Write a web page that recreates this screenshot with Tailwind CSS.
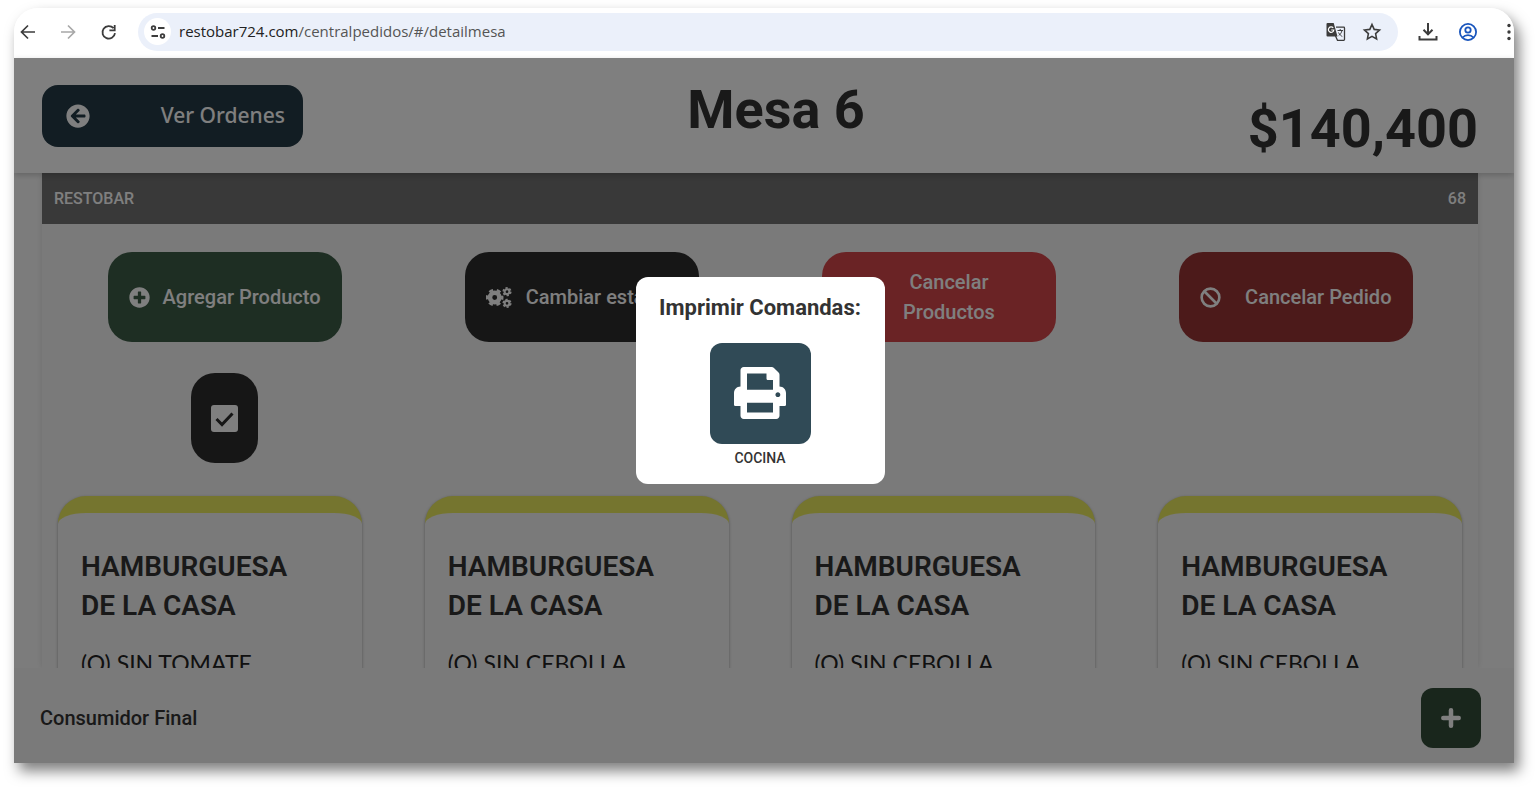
<!DOCTYPE html>
<html lang="es">
<head>
<meta charset="utf-8">
<meta name="viewport" content="width=device-width, initial-scale=1">
<title>Mesa 6 - Restobar</title>
<script src="https://cdn.jsdelivr.net/npm/@tailwindcss/browser@4"></script>
</head>
<body class="bg-white font-['Roboto',sans-serif] text-[#333]">
<div class="flex h-screen flex-col pt-2 pr-[22px] pb-[29px] pl-3.5">
<div class="flex min-h-0 flex-1 flex-col overflow-hidden rounded-t-3xl shadow-[5px_8px_14px_rgba(0,0,0,0.5)]">

  <!-- Browser toolbar -->
  <nav aria-label="Navegador" class="flex h-[50px] shrink-0 items-center overflow-hidden bg-white pb-[3px] pl-1 text-[#3c3c3c]">
    <button type="button" aria-label="Atrás" class="flex w-5 shrink-0 justify-center"><svg class="size-5" viewBox="0 0 20 20" fill="none" stroke="currentColor" stroke-width="1.7"><path d="M17 10H4M10 3.500 3.500 10l6.500 6.500"/></svg></button>
    <button type="button" aria-label="Adelante" class="ml-5 flex w-5 shrink-0 justify-center text-[#a8a8a8]"><svg class="size-5" viewBox="0 0 20 20" fill="none" stroke="currentColor" stroke-width="1.7"><path d="M3 10h13M10 3.500 16.500 10 10 16.500"/></svg></button>
    <button type="button" aria-label="Recargar" class="ml-5 flex w-5 shrink-0 justify-center"><svg class="size-5" viewBox="0 0 20 20" fill="none" stroke="currentColor" stroke-width="1.8"><path d="M15.500 6.200A6.300 6.300 0 1 0 17 11.200M16.700 3v5.300h-5.300"/></svg></button>
    <div class="ml-5 flex h-[38px] flex-1 items-center rounded-full bg-[#ebf0fa] px-1.5">
      <button type="button" aria-label="Información del sitio" class="flex size-[27px] shrink-0 items-center justify-center rounded-full bg-white"><svg class="size-4" viewBox="0 0 16 16" fill="none" stroke="currentColor" stroke-width="1.8"><circle cx="3.500" cy="4" r="1.800"/><path d="M8 4h6.500M1.500 12h6.500"/><circle cx="12.500" cy="12" r="1.800"/></svg></button>
      <span class="ml-2 font-['Open_Sans','Noto_Sans',sans-serif] text-[15px] whitespace-nowrap text-[#555]"><span class="text-[#222]">restobar724.com</span>/centralpedidos/#/detailmesa</span>
      <button type="button" aria-label="Traducir" class="ml-auto"><svg class="size-5" viewBox="0 0 20 20"><path d="M10 5.200h7.700c.5 0 .8.300.8.800v11.500c0 .5-.3.800-.8.800h-6.200L9.500 14" fill="none" stroke="#3c3c3c" stroke-width="1.300"/><path d="M1.500 1h6.200l3.800 13.500h-10Q.5 14.500.5 13.500V2q0-1 1-1z" fill="#3c3c3c"/><path d="M7.200 5.900A2.700 2.700 0 1 0 7.800 8H5.200" fill="none" stroke="#fff" stroke-width="1.200"/><path d="M11.500 8.500h5.500M14.200 7v1.500M16 8.500c-.5 2.500-2 4-3.300 5M12.500 10.500c1 2 2.500 3.300 3.800 4" fill="none" stroke="#3c3c3c" stroke-width="1"/></svg></button>
      <button type="button" aria-label="Favorito" class="mr-2.5 ml-4"><svg class="size-5" viewBox="0 0 20 20" fill="none" stroke="currentColor" stroke-width="1.600"><path d="m10 2.500 2.200 4.900 5.300.6-3.900 3.600 1 5.300L10 14.300l-4.600 2.600 1-5.300L2.500 8l5.300-.6z"/></svg></button>
    </div>
    <button type="button" aria-label="Descargas" class="ml-5"><svg class="size-5" viewBox="0 0 20 20" fill="none" stroke="currentColor" stroke-width="2"><path d="M10 1v11M5.500 7.800 10 12.300l4.500-4.500M1.500 14v3.500h17V14"/></svg></button>
    <button type="button" aria-label="Perfil" class="ml-5 text-[#1a56bd]"><svg class="size-5" viewBox="0 0 20 20" fill="none" stroke="currentColor" stroke-width="1.800"><circle cx="10" cy="10" r="8.100"/><circle cx="10" cy="8" r="2.700"/><path d="M4.500 15.500c3-3.300 8-3.300 11 0"/></svg></button>
    <button type="button" aria-label="Menú" class="-mr-1 ml-5"><svg class="size-5" viewBox="0 0 20 20" fill="currentColor"><circle cx="11" cy="3.500" r="1.700"/><circle cx="11" cy="10" r="1.700"/><circle cx="11" cy="16.500" r="1.700"/></svg></button>
  </nav>

  <div class="relative flex min-h-0 flex-1 flex-col bg-[#f9f9f9]">
    <header class="relative z-10 grid h-[115px] shrink-0 grid-cols-3 items-start bg-white pr-9 pl-7 shadow-[0_2px_6px_rgba(0,0,0,0.2)]">
      <button type="button" class="mt-[27px] flex h-[62px] w-[261px] items-center justify-between rounded-2xl bg-[#243a46] pr-[18px] pl-6 font-['Noto_Sans','Open_Sans',sans-serif] text-[21px] font-medium text-white">
        <svg class="size-6" viewBox="0 0 512 512" fill="currentColor"><path d="M256 504C119 504 8 393 8 256S119 8 256 8s248 111 248 248-111 248-248 248zm28.900-143.600L209.400 288H392c13.300 0 24-10.700 24-24v-16c0-13.300-10.700-24-24-24H209.400l75.500-72.400c9.700-9.300 9.900-24.800.4-34.300l-11-10.900c-9.400-9.400-24.600-9.400-33.900 0L107.700 239c-9.400 9.400-9.400 24.600 0 33.900l132.700 132.700c9.400 9.400 24.600 9.400 33.900 0l11-10.900c9.500-9.500 9.300-25-.4-34.300z"/></svg>
        Ver Ordenes
      </button>
      <h1 class="mt-4 pl-8 text-center text-[54px] leading-[72px] font-bold">Mesa 6</h1>
      <p class="mt-[35px] text-right text-[54px] leading-[72px] font-bold">$140,400</p>
    </header>

    <main class="mr-9 ml-7 flex min-h-0 flex-1 flex-col overflow-hidden bg-[#f4f4f4] shadow-[0_0_6px_rgba(0,0,0,0.12)]">
      <div class="flex h-[51px] shrink-0 items-center justify-between bg-[#727272] px-3 text-base font-medium text-white"><span>RESTOBAR</span><span>68</span></div>
      <div class="grid shrink-0 grid-cols-4 justify-items-center gap-y-[31px] px-1 pt-7 text-xl leading-[30px] font-medium text-white">
        <button type="button" class="flex h-[90px] w-[234px] items-center justify-between rounded-3xl bg-[#3c5c46] px-[21px]">
          <svg class="size-[21px]" viewBox="0 0 512 512" fill="currentColor"><path d="M256 8C119 8 8 119 8 256s111 248 248 248 248-111 248-248S393 8 256 8zm144 276c0 6.600-5.400 12-12 12h-92v92c0 6.600-5.400 12-12 12h-56c-6.600 0-12-5.400-12-12v-92h-92c-6.600 0-12-5.400-12-12v-56c0-6.600 5.400-12 12-12h92v-92c0-6.600 5.400-12 12-12h56c6.600 0 12 5.400 12 12v92h92c6.600 0 12 5.400 12 12v56z"/></svg>Agregar Producto
        </button>
        <button type="button" class="flex h-[90px] w-[234px] items-center justify-between rounded-3xl bg-[#2c2c2c] px-[21px]">
          <svg class="h-[21px] w-[26px] shrink-0" viewBox="0 0 26 21" fill="none" stroke="currentColor"><circle cx="8.700" cy="10.500" r="4.700" stroke-width="4.500"/><circle cx="8.700" cy="10.500" r="7.600" stroke-width="2.400" stroke-dasharray="4.200 3.758" stroke-dashoffset="2.100"/><circle cx="21" cy="4.700" r="2.400" stroke-width="2.100"/><circle cx="21" cy="4.700" r="3.800" stroke-width="1.600" stroke-dasharray="2.200 1.779"/><circle cx="21" cy="16.300" r="2.400" stroke-width="2.100"/><circle cx="21" cy="16.300" r="3.800" stroke-width="1.600" stroke-dasharray="2.200 1.779"/></svg>Cambiar estados
        </button>
        <button type="button" class="flex h-[90px] w-[234px] items-center justify-between rounded-3xl bg-[#d4464a] px-[21px]">
          <svg class="size-[21px]" viewBox="0 0 512 512" fill="none" stroke="currentColor" stroke-width="64"><circle cx="256" cy="256" r="216"/><path d="m176 176 160 160m0-160L176 336"/></svg><span class="flex-1 text-center">Cancelar<br>Productos</span>
        </button>
        <button type="button" class="flex h-[90px] w-[234px] items-center justify-between rounded-3xl bg-[#983434] px-[21px]">
          <svg class="size-[21px]" viewBox="0 0 512 512" fill="none" stroke="currentColor" stroke-width="64"><circle cx="256" cy="256" r="216"/><path d="m103 103 306 306"/></svg>Cancelar Pedido
        </button>
        <button type="button" aria-label="Seleccionar" class="flex h-[90px] w-[67px] items-center justify-center rounded-3xl bg-[#2c2c2c]">
          <svg class="size-[27px]" viewBox="0 0 27 27"><rect width="27" height="27" rx="3" fill="#fff"/><path d="m5.500 14 5.500 5.500L21.500 8.500" fill="none" stroke="#2c2c2c" stroke-width="3"/></svg>
        </button>
      </div>

      <div class="mt-[33px] grid shrink-0 grid-cols-4 gap-[63px] px-4">
        <article class="h-[260px] rounded-[28px] border-t-[17px] border-[#eaea5e] bg-[#f4f4f4] px-[23px] pt-[34px] shadow-[0_1px_3px_rgba(0,0,0,0.35)]">
          <h2 class="text-[28px] leading-[39px] font-semibold">HAMBURGUESA<br>DE LA CASA</h2>
          <p class="mt-[22px] font-['Lato',sans-serif] text-[23px] leading-8 whitespace-nowrap text-[#222]">(O) SIN TOMATE</p>
        </article>
        <article class="h-[260px] rounded-[28px] border-t-[17px] border-[#eaea5e] bg-[#f4f4f4] px-[23px] pt-[34px] shadow-[0_1px_3px_rgba(0,0,0,0.35)]">
          <h2 class="text-[28px] leading-[39px] font-semibold">HAMBURGUESA<br>DE LA CASA</h2>
          <p class="mt-[22px] font-['Lato',sans-serif] text-[23px] leading-8 whitespace-nowrap text-[#222]">(O) SIN CEBOLLA</p>
        </article>
        <article class="h-[260px] rounded-[28px] border-t-[17px] border-[#eaea5e] bg-[#f4f4f4] px-[23px] pt-[34px] shadow-[0_1px_3px_rgba(0,0,0,0.35)]">
          <h2 class="text-[28px] leading-[39px] font-semibold">HAMBURGUESA<br>DE LA CASA</h2>
          <p class="mt-[22px] font-['Lato',sans-serif] text-[23px] leading-8 whitespace-nowrap text-[#222]">(O) SIN CEBOLLA</p>
        </article>
        <article class="h-[260px] rounded-[28px] border-t-[17px] border-[#eaea5e] bg-[#f4f4f4] px-[23px] pt-[34px] shadow-[0_1px_3px_rgba(0,0,0,0.35)]">
          <h2 class="text-[28px] leading-[39px] font-semibold">HAMBURGUESA<br>DE LA CASA</h2>
          <p class="mt-[22px] font-['Lato',sans-serif] text-[23px] leading-8 whitespace-nowrap text-[#222]">(O) SIN CEBOLLA</p>
        </article>
      </div>
    </main>

    <footer class="flex h-[95px] shrink-0 items-center justify-between bg-[#f4f4f4] pt-1 pr-[33px] pl-[26px]">
      <span class="text-xl font-medium">Consumidor Final</span>
      <button type="button" aria-label="Agregar" class="flex size-[60px] items-center justify-center rounded-xl bg-[#324c38]"><svg class="size-5" viewBox="0 0 20 20" fill="none" stroke="#fff" stroke-width="4.500" stroke-linecap="round"><path d="M10 2.300v15.400M2.300 10h15.400"/></svg></button>
    </footer>

    <!-- Print dialog over the dimmed page -->
    <div class="absolute inset-0 z-20 flex items-center justify-center bg-black/50 pr-2">
      <section role="dialog" aria-modal="true" aria-labelledby="print-title" class="mb-[61px] flex h-[207px] w-[249px] flex-col items-center rounded-xl bg-white pt-4">
        <h2 id="print-title" class="text-[22px] leading-[30px] font-bold">Imprimir Comandas:</h2>
        <button type="button" aria-labelledby="print-cocina" class="mt-5 flex size-[101px] items-center justify-center rounded-xl bg-[#304a56]"><svg class="size-[52px]" viewBox="0 0 512 512" fill="#fff"><path d="M448 192V77.250c0-8.490-3.370-16.620-9.370-22.630L393.370 9.370c-6-6-14.140-9.370-22.630-9.370H96C78.330 0 64 14.330 64 32v160c-35.350 0-64 28.650-64 64v112c0 8.840 7.160 16 16 16h48v96c0 17.670 14.330 32 32 32h320c17.670 0 32-14.330 32-32v-96h48c8.840 0 16-7.160 16-16V256c0-35.350-28.650-64-64-64zm-64 256H128v-96h256v96zm0-224H128V64h192v48c0 8.840 7.160 16 16 16h48v96zm48 72c-13.250 0-24-10.750-24-24 0-13.260 10.750-24 24-24s24 10.740 24 24c0 13.250-10.750 24-24 24z"/></svg></button>
        <span id="print-cocina" class="mt-1 text-sm font-medium">COCINA</span>
      </section>
    </div>
  </div>
</div>
</div>
</body>
</html>
